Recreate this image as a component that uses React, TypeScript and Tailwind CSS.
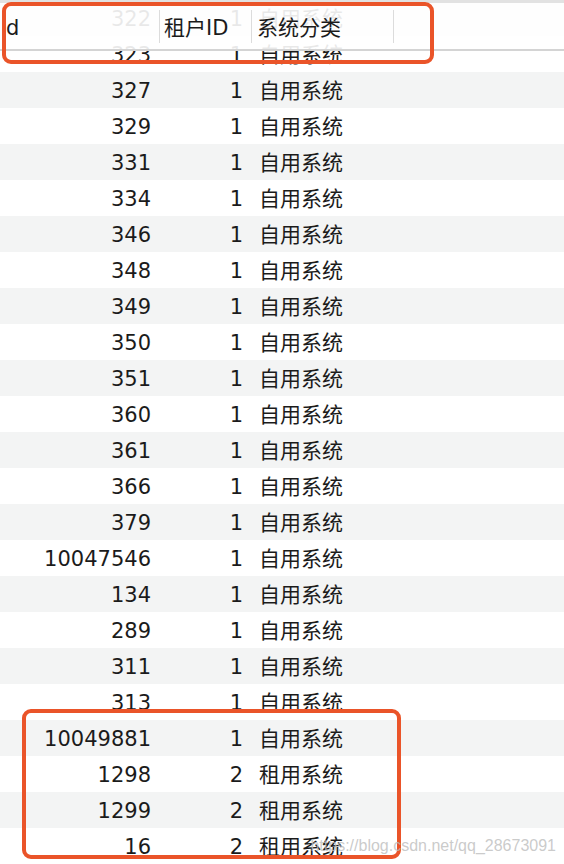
const ROWS: [string, string, string][] = [
  ['322', '1', '自用系统'],
  ['323', '1', '自用系统'],
  ['327', '1', '自用系统'],
  ['329', '1', '自用系统'],
  ['331', '1', '自用系统'],
  ['334', '1', '自用系统'],
  ['346', '1', '自用系统'],
  ['348', '1', '自用系统'],
  ['349', '1', '自用系统'],
  ['350', '1', '自用系统'],
  ['351', '1', '自用系统'],
  ['360', '1', '自用系统'],
  ['361', '1', '自用系统'],
  ['366', '1', '自用系统'],
  ['379', '1', '自用系统'],
  ['10047546', '1', '自用系统'],
  ['134', '1', '自用系统'],
  ['289', '1', '自用系统'],
  ['311', '1', '自用系统'],
  ['313', '1', '自用系统'],
  ['10049881', '1', '自用系统'],
  ['1298', '2', '租用系统'],
  ['1299', '2', '租用系统'],
  ['16', '2', '租用系统'],
];

const FONT = { fontFamily: '"DejaVu Sans", "Noto Sans CJK SC", sans-serif' };

export default function App() {
  return (
    <div className="relative h-[864px] w-[564px] overflow-hidden bg-white text-[21px] text-[#1b1b1b]" style={FONT}>
      <div className="flex flex-col">
        {ROWS.map(([id, tenant, kind], i) => (
          <div
            key={id}
            className={`flex h-[36px] items-center pt-[4px] ${i % 2 === 0 ? 'bg-[#f3f4f4]' : 'bg-white'}`}
          >
            <span className="w-[159px] pr-[8px] text-right">{id}</span>
            <span className="w-[92px] pr-[8px] text-right">{tenant}</span>
            <span className="pl-[8px]">{kind}</span>
          </div>
        ))}
      </div>

      {/* sticky header, half see-through */}
      <div className="absolute left-0 right-0 top-0 flex h-[51px] items-center border-b-2 border-t-[3px] border-b-[#d4d4d4] border-t-[#e2e2e2] bg-white/90">
        <span className="w-[159px] pl-[6px] pt-[5px]">d</span>
        <span className="h-[33px] w-px bg-[#dcdcdc]" />
        <span className="w-[91px] pl-[4px] pt-[5px]">租户ID</span>
        <span className="h-[33px] w-px bg-[#dcdcdc]" />
        <span className="w-[141px] pl-[5px] pt-[5px]">系统分类</span>
        <span className="h-[33px] w-px bg-[#dcdcdc]" />
      </div>

      {/* annotation boxes */}
      <div className="absolute left-[2px] top-[2px] h-[62px] w-[432px] rounded-[9px] border-[4px] border-[#ea5429]" />
      <div className="absolute left-[22px] top-[709px] h-[150px] w-[379px] rounded-[9px] border-[4px] border-[#ea5429]" />

      <div
        className="absolute right-[8px] top-[834px] text-[16px] text-[#bdbdbd]/80"
        style={{ fontFamily: '"Liberation Sans", Arial, sans-serif' }}
      >
        https://blog.csdn.net/qq_28673091
      </div>
    </div>
  );
}
